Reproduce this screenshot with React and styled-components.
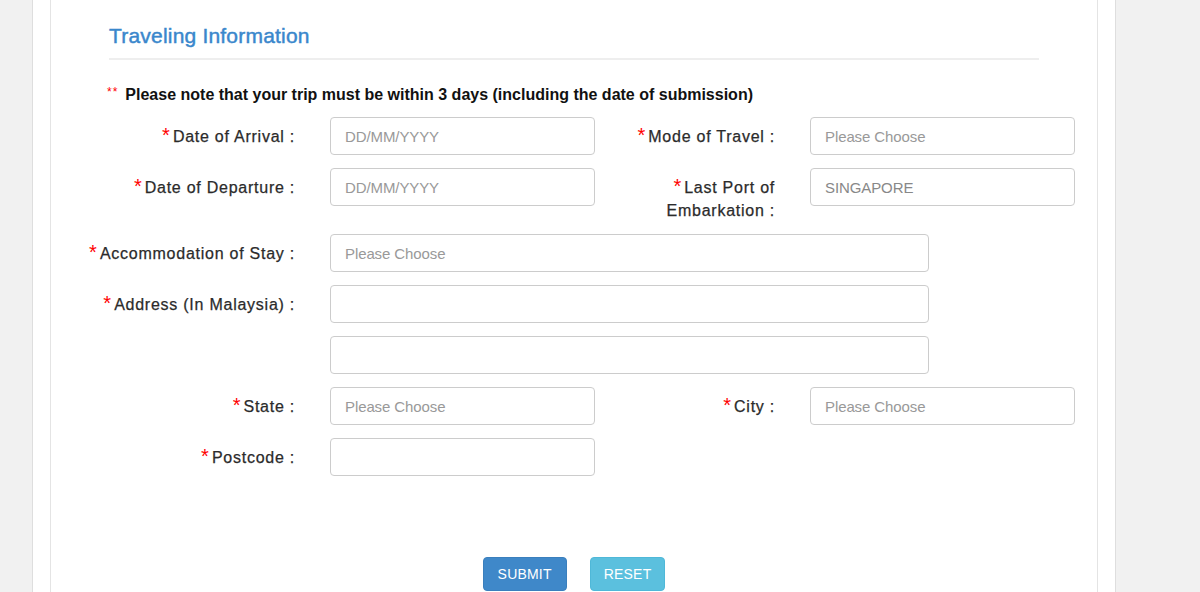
import React from 'react';
import styled, { createGlobalStyle } from 'styled-components';

const GlobalStyle = createGlobalStyle`
  html, body {
    margin: 0;
    padding: 0;
    height: 100%;
    overflow: hidden;
    background: #f1f1f1;
    font-family: "Liberation Sans", Arial, Helvetica, sans-serif;
    color: #333;
  }
  * {
    box-sizing: border-box;
  }
`;

const Page = styled.div`
  height: 100vh;
  padding: 0 84px 0 32px;
`;

const Wrapper = styled.div`
  height: 100%;
  background: white;
  border-left: 1px solid #dedede;
  border-right: 1px solid #dedede;
  padding: 0 17px;
`;

const Panel = styled.div`
  height: 100%;
  border-left: 1px solid #e4e4e4;
  border-right: 1px solid #e4e4e4;
`;

const Header = styled.div`
  padding: 25px 58px 0;
`;

const Title = styled.h2`
  margin: 0;
  font-size: 21px;
  line-height: 22px;
  font-weight: 400;
  color: #3a87cc;
  letter-spacing: 0.2px;
  -webkit-text-stroke: 0.45px #3a87cc;
`;

const Divider = styled.hr`
  margin: 11px 0 0;
  border: none;
  border-top: 2px solid #eeeeee;
`;

const Note = styled.p`
  display: flex;
  align-items: center;
  margin: 24px 0 0 -2px;
  font-size: 16px;
  line-height: 22px;
  font-weight: 700;
  color: #111;
`;

const NoteMark = styled.span`
  color: #f00;
  font-size: 12px;
  font-weight: 400;
  line-height: 12px;
  letter-spacing: 1px;
  margin-right: 7px;
  align-self: flex-start;
  margin-top: 2px;
`;

const Form = styled.form`
  margin-top: 11px;
  display: flex;
  flex-direction: column;
  gap: 13px;
`;

const Row = styled.div`
  display: flex;
  align-items: flex-start;
`;

const Field = styled.div`
  display: flex;
  align-items: flex-start;
  gap: 35px;
`;

const Label = styled.label`
  width: ${p => p.$width}px;
  padding: 8px 0 0 ${p => p.$inset || 0}px;
  margin-bottom: -1px;
  text-align: right;
  font-size: 16px;
  line-height: 23px;
  letter-spacing: 0.75px;
  color: #2b2b2b;
  -webkit-text-stroke: 0.25px #2b2b2b;
`;

const Req = styled.span`
  color: #f00;
  font-size: 20px;
  line-height: 0;
  letter-spacing: 0;
  -webkit-text-stroke: 0;
  margin-right: 3px;
`;

const Input = styled.input`
  width: ${p => (p.$wide ? 599 : 265)}px;
  height: 38px;
  padding: 0 14px;
  border: 1px solid #cccccc;
  border-radius: 4px;
  font-family: inherit;
  font-size: 15px;
  color: #888;
  letter-spacing: -0.1px;
  outline: none;

  &::placeholder {
    color: #999;
  }
`;

const Actions = styled.div`
  display: flex;
  justify-content: center;
  gap: 23px;
  margin-top: 68px;
`;

const Button = styled.button`
  height: 34px;
  padding: 0 ${p => p.$pad}px;
  border-radius: 4px;
  border: 1px solid ${p => p.$border};
  background: ${p => p.$bg};
  color: white;
  font-family: inherit;
  font-size: 14px;
  letter-spacing: 0.2px;
  text-transform: uppercase;
  cursor: pointer;
`;

const LEFT = 244;
const RIGHT = 180;

const FormField = ({ label, width, inset, wide, placeholder, value }) => (
  <Field>
    <Label $width={width} $inset={inset}>
      {label && <Req>*</Req>}
      {label}
    </Label>
    <Input $wide={wide} placeholder={placeholder} defaultValue={value} />
  </Field>
);

export default function App() {
  return (
    <>
      <GlobalStyle />
      <Page>
        <Wrapper>
          <Panel>
            <Header>
              <Title>Traveling Information</Title>
              <Divider />
              <Note>
                <NoteMark>**</NoteMark>
                Please note that your trip must be within 3 days (including the date of submission)
              </Note>
            </Header>

            <Form onSubmit={e => e.preventDefault()}>
              <Row>
                <FormField label="Date of Arrival :" width={LEFT} placeholder="DD/MM/YYYY" />
                <FormField label="Mode of Travel :" width={RIGHT} inset={30} placeholder="Please Choose" />
              </Row>
              <Row>
                <FormField label="Date of Departure :" width={LEFT} placeholder="DD/MM/YYYY" />
                <FormField label="Last Port of Embarkation :" width={RIGHT} inset={30} value="SINGAPORE" />
              </Row>
              <Row>
                <FormField label="Accommodation of Stay :" width={LEFT} wide placeholder="Please Choose" />
              </Row>
              <Row>
                <FormField label="Address (In Malaysia) :" width={LEFT} wide />
              </Row>
              <Row>
                <FormField label="" width={LEFT} wide />
              </Row>
              <Row>
                <FormField label="State :" width={LEFT} placeholder="Please Choose" />
                <FormField label="City :" width={RIGHT} inset={30} placeholder="Please Choose" />
              </Row>
              <Row>
                <FormField label="Postcode :" width={LEFT} />
              </Row>

              <Actions>
                <Button type="submit" $pad={14} $bg="#3f88c9" $border="#3a7fbd">Submit</Button>
                <Button type="reset" $pad={13} $bg="#5bc0de" $border="#4fb8d8">Reset</Button>
              </Actions>
            </Form>
          </Panel>
        </Wrapper>
      </Page>
    </>
  );
}
